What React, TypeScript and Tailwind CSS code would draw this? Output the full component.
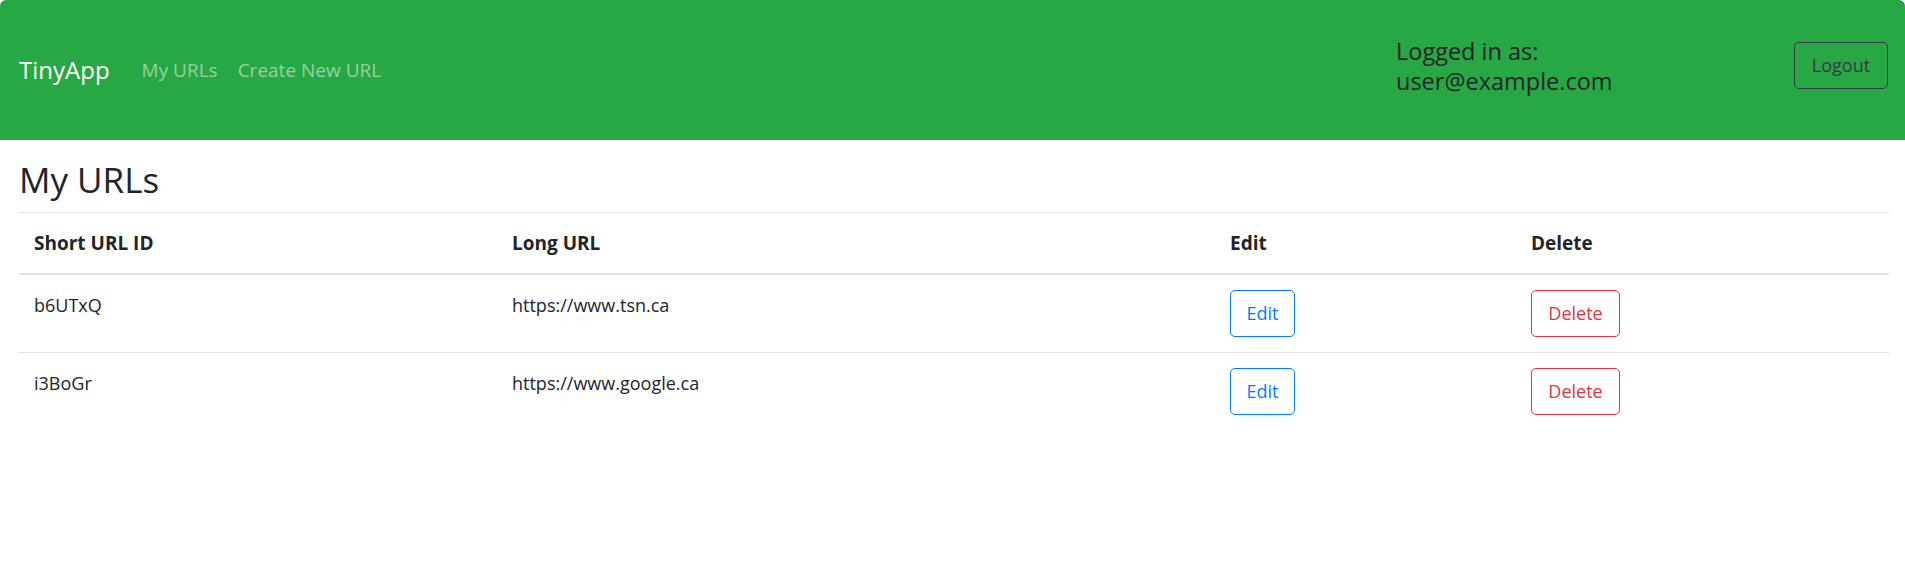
const urls = [
  { id: 'b6UTxQ', longURL: 'https://www.tsn.ca' },
  { id: 'i3BoGr', longURL: 'https://www.google.ca' },
];

export default function App() {
  return (
    <div className="min-h-screen bg-white text-[#212529] font-['Open_Sans',sans-serif] text-[18px] leading-[28.8px]">
      {/* Navbar */}
      <nav className="flex items-center h-[140px] bg-[#28a745] pl-[19px] pr-[17px] rounded-t-[6px]">
        <a href="#" className="text-white text-[24px] leading-[30px] mr-[22px]">TinyApp</a>
        <div className="flex items-center">
          <a href="#" className="px-[10px] text-[19px] text-white/50">My URLs</a>
          <a href="#" className="px-[10px] text-[19px] text-white/50">Create New URL</a>
        </div>
        <div className="ml-auto flex items-center">
          <h5 className="w-[398px] text-[23.5px] leading-[30px] mb-[9px] font-medium text-[#212529]">
            Logged in as:
            <br />
            user@example.com
          </h5>
          <button className="w-[94px] h-[47px] mb-[9px] border border-[#343a40] rounded-[5px] text-[#343a40] text-[18px]">
            Logout
          </button>
        </div>
      </nav>

      {/* Content */}
      <div className="pl-[19px] pr-[16px]">
        <h2 className="text-[35px] leading-[44px] mt-[18px] mb-[10px] font-medium">My URLs</h2>
        <table className="w-full table-fixed border-collapse">
          <thead>
            <tr>
              <th className="w-[478px] text-left font-bold text-[19px] px-[15px] py-[15.5px] border-t border-b-2 border-[#dee2e6] align-top">Short URL ID</th>
              <th className="w-[718px] text-left font-bold text-[19px] px-[15px] py-[15.5px] border-t border-b-2 border-[#dee2e6] align-top">Long URL</th>
              <th className="w-[301px] text-left font-bold text-[19px] px-[15px] py-[15.5px] border-t border-b-2 border-[#dee2e6] align-top">Edit</th>
              <th className="text-left font-bold text-[19px] px-[15px] py-[15.5px] border-t border-b-2 border-[#dee2e6] align-top">Delete</th>
            </tr>
          </thead>
          <tbody>
            {urls.map((url) => (
              <tr key={url.id}>
                <td className="px-[15px] pt-[16px] pb-[14px] border-t border-[#dee2e6] align-top">{url.id}</td>
                <td className="px-[15px] pt-[16px] pb-[14px] border-t border-[#dee2e6] align-top">{url.longURL}</td>
                <td className="px-[15px] pt-[15px] pb-[15px] border-t border-[#dee2e6] align-top">
                  <button className="w-[65px] h-[47px] border border-[#007bff] rounded-[5px] text-[#007bff] text-[18px]">Edit</button>
                </td>
                <td className="px-[15px] pt-[15px] pb-[15px] border-t border-[#dee2e6] align-top">
                  <button className="w-[89px] h-[47px] border border-[#dc3545] rounded-[5px] text-[#dc3545] text-[18px]">Delete</button>
                </td>
              </tr>
            ))}
          </tbody>
        </table>
      </div>
    </div>
  );
}
